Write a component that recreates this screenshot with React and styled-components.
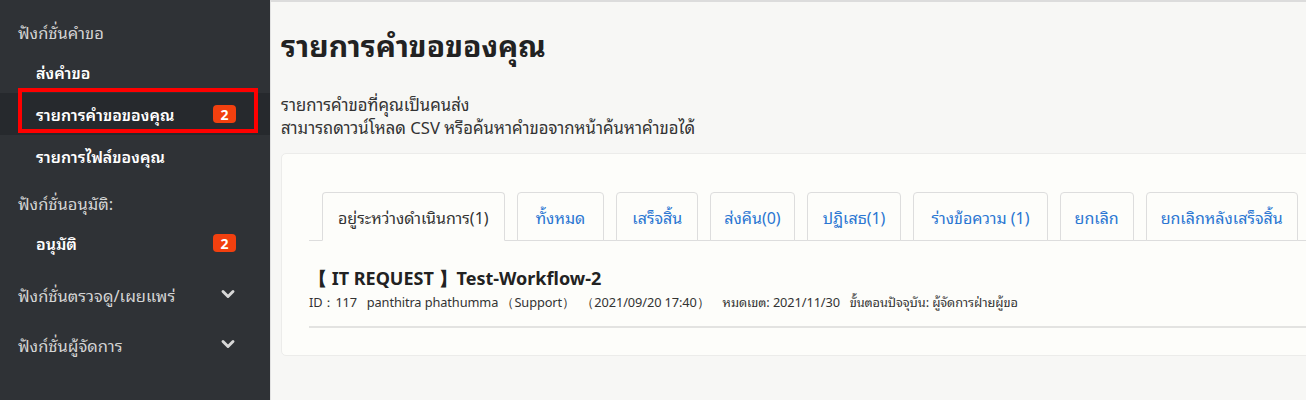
import React from 'react';
import styled, { createGlobalStyle } from 'styled-components';
import { ChevronDown } from 'lucide-react';

const GlobalStyle = createGlobalStyle`
  html, body {
    margin: 0;
    padding: 0;
    height: 400px;
    overflow: hidden;
    font-family: "Noto Sans", "Noto Sans Thai Looped", "Noto Sans Thai", "Open Sans", sans-serif;
  }
`;

const Page = styled.div`
  display: flex;
  width: 1306px;
  height: 400px;
  overflow: hidden;
`;

const Sidebar = styled.nav`
  position: relative;
  flex: 0 0 270px;
  background: #2f3236;
  padding-top: 11px;
  box-sizing: border-box;
`;

const Heading = styled.div`
  display: flex;
  align-items: center;
  justify-content: space-between;
  height: 40px;
  margin-top: ${(p) => p.gap || 0}px;
  padding: 0 32px 0 18px;
  color: #d4d4d4;
  font-size: 16.5px;
`;

const Item = styled.div`
  display: flex;
  align-items: center;
  justify-content: space-between;
  height: 42px;
  padding: 0 34px 0 36px;
  color: #ffffff;
  font-size: 16px;
  font-weight: 600;
  background: ${(p) => (p.active ? '#26292d' : 'transparent')};
`;

const Badge = styled.span`
  display: inline-flex;
  align-items: center;
  justify-content: center;
  min-width: 23px;
  height: 18px;
  border-radius: 4px;
  background: #f2400f;
  color: #fff;
  font-size: 14px;
  font-weight: 700;
`;

const Highlight = styled.div`
  position: absolute;
  left: 18px;
  top: 88px;
  width: 240px;
  height: 45px;
  border: 4px solid #ff0000;
  box-sizing: border-box;
  pointer-events: none;
`;

const Main = styled.main`
  flex: 1;
  min-width: 0;
  background: #f7f7f5;
  border-top: 2px solid #dcdcdc;
  border-left: 1px solid #e2e2e2;
  padding: 0 0 0 10px;
  box-sizing: border-box;
  overflow: hidden;
`;

const Title = styled.h1`
  margin: 26px 0 0;
  font-size: 30px;
  font-weight: 700;
  color: #222;
  line-height: 36px;
`;

const Desc = styled.p`
  margin: 29px 0 0;
  font-size: 16.7px;
  line-height: 23px;
  color: #333;
`;

const Card = styled.section`
  width: 1080px;
  margin-top: 14px;
  background: #fdfdfa;
  border: 1px solid #ececea;
  border-radius: 5px;
  padding: 38px 0 27px 27px;
  box-sizing: border-box;
`;

const Tabs = styled.ul`
  display: flex;
  gap: 12px;
  margin: 0;
  padding: 0 0 0 13px;
  list-style: none;
  border-bottom: 1px solid #dddddd;
`;

const Tab = styled.li`
  display: flex;
  align-items: center;
  height: 47px;
  padding: 0 ${(p) => p.pad || 15}px;
  margin-bottom: -1px;
  border: 1px solid #dddddd;
  border-bottom-color: ${(p) => (p.active ? '#fdfdfa' : '#dddddd')};
  border-radius: 4px 4px 0 0;
  background: #fdfdfa;
  color: ${(p) => (p.active ? '#333' : '#2a76d2')};
  font-size: 16px;
  white-space: nowrap;
`;

const Request = styled.div`
  padding: 26px 0 16px;
  border-bottom: 2px solid #e3e3e1;
`;

const ReqTitle = styled.div`
  font-size: 18px;
  font-weight: 700;
  color: #222;
  line-height: 22px;
`;

const Meta = styled.div`
  margin-top: 5px;
  font-size: 12.8px;
  color: #333;
  line-height: 16px;
  letter-spacing: -0.1px;
  white-space: pre;
`;

const tabs = [
  { label: 'อยู่ระหว่างดำเนินการ(1)', active: true },
  { label: 'ทั้งหมด', pad: 18 },
  { label: 'เสร็จสิ้น' },
  { label: 'ส่งคืน(0)', pad: 13 },
  { label: 'ปฏิเสธ(1)' },
  { label: 'ร่างข้อความ (1)', pad: 17 },
  { label: 'ยกเลิก', pad: 14 },
  { label: 'ยกเลิกหลังเสร็จสิ้น', pad: 14 },
];

export default function App() {
  return (
    <>
      <GlobalStyle />
      <Page>
        <Sidebar>
          <Heading>ฟังก์ชั่นคำขอ</Heading>
          <Item>ส่งคำขอ</Item>
          <Item active>
            รายการคำขอของคุณ <Badge>2</Badge>
          </Item>
          <Item>รายการไฟล์ของคุณ</Item>
          <Heading gap={5}>ฟังก์ชั่นอนุมัติ:</Heading>
          <Item>
            อนุมัติ <Badge>2</Badge>
          </Item>
          <Heading gap={10}>
            ฟังก์ชั่นตรวจดู/เผยแพร่
            <ChevronDown size={20} strokeWidth={3.5} color="#d8d8d8" />
          </Heading>
          <Heading gap={10}>
            ฟังก์ชั่นผู้จัดการ
            <ChevronDown size={20} strokeWidth={3.5} color="#d8d8d8" />
          </Heading>
          <Highlight />
        </Sidebar>
        <Main>
          <Title>รายการคำขอของคุณ</Title>
          <Desc>
            รายการคำขอที่คุณเป็นคนส่ง
            <br />
            สามารถดาวน์โหลด CSV หรือค้นหาคำขอจากหน้าค้นหาคำขอได้
          </Desc>
          <Card>
            <Tabs>
              {tabs.map((t) => (
                <Tab key={t.label} active={t.active} pad={t.pad}>
                  {t.label}
                </Tab>
              ))}
            </Tabs>
            <Request>
              <ReqTitle>【 IT REQUEST 】Test-Workflow-2</ReqTitle>
              <Meta>
                {'ID：117   panthitra phathumma （Support）  （2021/09/20 17:40）    หมดเขต: 2021/11/30   ขั้นตอนปัจจุบัน: ผู้จัดการฝ่ายผู้ขอ'}
              </Meta>
            </Request>
          </Card>
        </Main>
      </Page>
    </>
  );
}
